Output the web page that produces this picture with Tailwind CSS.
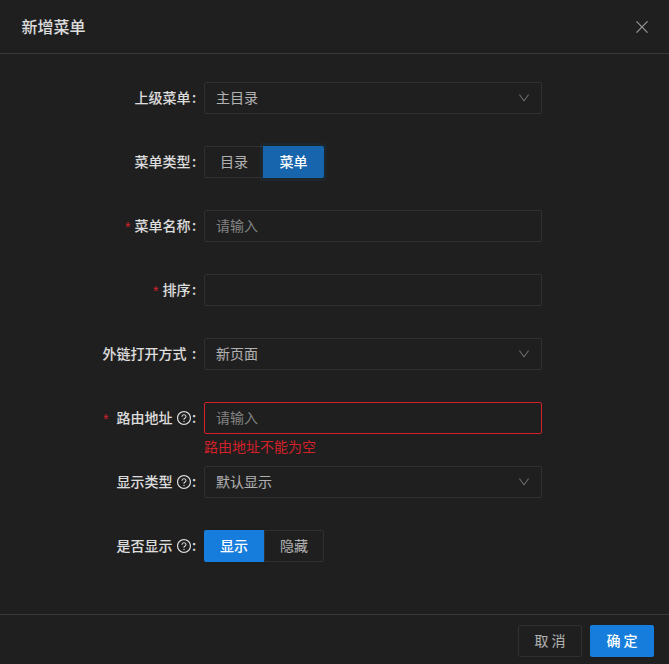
<!DOCTYPE html>
<html lang="zh-CN">
<head>
<meta charset="utf-8">
<title>新增菜单</title>
<script src="https://cdn.jsdelivr.net/npm/@tailwindcss/browser@4"></script>
</head>
<body class="bg-[#1f1f1f]">
<svg class="hidden" xmlns="http://www.w3.org/2000/svg">
  <symbol id="down" viewBox="64 64 896 896"><path d="M884 256h-75c-5.1 0-9.9 2.5-12.900 6.600L512 654.200 227.900 262.600c-3-4.100-7.800-6.600-12.900-6.600h-75c-6.500 0-10.300 7.400-6.500 12.700l352.600 486.100c12.800 17.600 39 17.600 51.700 0l352.600-486.100c3.900-5.300.1-12.700-6.400-12.700z"/></symbol>
  <symbol id="help" viewBox="64 64 896 896"><path d="M512 64C264.600 64 64 264.600 64 512s200.600 448 448 448 448-200.600 448-448S759.400 64 512 64zm0 820c-205.400 0-372-166.600-372-372s166.600-372 372-372 372 166.600 372 372-166.600 372-372 372z"/><path d="M623.600 316.700C593.600 290.400 554 276 512 276s-81.600 14.500-111.600 40.700C369.200 344 352 380.700 352 420v7.600c0 4.400 3.600 8 8 8h48c4.400 0 8-3.600 8-8V420c0-44.100 43.100-80 96-80s96 35.900 96 80c0 31.100-22 59.600-56.100 72.700-21.200 8.100-39.200 22.300-52.100 40.900-13.100 19-19.900 41.800-19.900 64.900V620c0 4.400 3.600 8 8 8h48c4.400 0 8-3.600 8-8v-22.700a48.300 48.300 0 0 1 30.900-44.800c59-22.700 97.100-74.700 97.100-132.500.1-39.300-17.100-76-48.300-103.300zM472 732a40 40 0 1 0 80 0 40 40 0 1 0-80 0z"/></symbol>
</svg>
<main class="flex h-[664px] w-[669px] flex-col bg-[#1f1f1f] font-['Noto_Sans_CJK_SC',sans-serif] text-sm leading-[22px] text-white/85">
  <header class="flex h-[54px] shrink-0 items-center justify-between border-b border-[#3a3a3a] pr-5 pl-[21.5px]">
    <h1 class="pb-[2px] text-base leading-[22px] font-medium">新增菜单</h1>
    <svg class="h-[14px] w-[14px] text-white/55" viewBox="0 0 14 14" fill="none" stroke="currentColor" stroke-width="1.150"><path d="M1.500 1.300 12.500 12.700M12.500 1.300 1.500 12.700"/></svg>
  </header>

  <form class="flex flex-1 flex-col gap-8 pt-7">
    <div class="flex h-8">
      <div class="flex w-[204px] items-center justify-end pr-2 pb-[2px] font-medium">上级菜单<span class="ml-[1.500px] w-[4px]">:</span></div>
      <div class="flex w-[338px] items-center justify-between rounded-[2px] border border-[#303030] px-[11px] text-white/65"><span class="pb-[2px]">主目录</span><svg class="h-3 w-3 fill-white/35"><use href="#down"/></svg></div>
    </div>
    <div class="flex h-8">
      <div class="flex w-[204px] items-center justify-end pr-2 pb-[2px] font-medium">菜单类型<span class="ml-[1.500px] w-[4px]">:</span></div>
      <div class="flex text-white/65">
        <div class="flex w-[59px] items-center justify-center rounded-l-[2px] border border-r-0 border-[#303030] pb-[2px]">目录</div>
        <div class="flex w-[61px] items-center justify-center rounded-r-[2px] bg-[#1765ad] pb-[2px] font-medium text-white shadow-[0_0_0_3px_rgba(23,125,220,0.08)]">菜单</div>
      </div>
    </div>
    <div class="flex h-8">
      <div class="flex w-[204px] items-center justify-end pr-2 pb-[2px] font-medium"><span class="mr-1 pt-[3px] font-['Liberation_Sans',sans-serif] font-normal text-[#d32029]">*</span>菜单名称<span class="ml-[1.500px] w-[4px]">:</span></div>
      <div class="flex w-[338px] items-center rounded-[2px] border border-[#303030] px-[11px] pb-[2px] text-white/45">请输入</div>
    </div>
    <div class="flex h-8">
      <div class="flex w-[204px] items-center justify-end pr-2 pb-[2px] font-medium"><span class="mr-1 pt-[3px] font-['Liberation_Sans',sans-serif] font-normal text-[#d32029]">*</span>排序<span class="ml-[1.500px] w-[4px]">:</span></div>
      <div class="w-[338px] rounded-[2px] border border-[#303030]"></div>
    </div>
    <div class="flex h-8">
      <div class="flex w-[204px] items-center justify-end pr-2 pb-[2px] font-medium">外链打开方式<span class="ml-[5.500px] w-[4px]">:</span></div>
      <div class="flex w-[338px] items-center justify-between rounded-[2px] border border-[#303030] px-[11px] text-white/65"><span class="pb-[2px]">新页面</span><svg class="h-3 w-3 fill-white/35"><use href="#down"/></svg></div>
    </div>
    <div class="flex h-8">
      <div class="flex w-[204px] items-center justify-end pr-2 pb-[2px] font-medium"><span class="mr-2 pt-[3px] font-['Liberation_Sans',sans-serif] font-normal text-[#d32029]">*</span>路由地址<svg class="mt-[2px] ml-1 h-[14px] w-[14px] fill-current"><use href="#help"/></svg><span class="ml-[1.500px] w-[4px]">:</span></div>
      <div class="w-[338px]">
        <div class="flex h-8 items-center rounded-[2px] border border-[#d32029] px-[11px] pb-[2px] text-white/45">请输入</div>
        <p class="pt-px text-[#d32029]">路由地址不能为空</p>
      </div>
    </div>
    <div class="flex h-8">
      <div class="flex w-[204px] items-center justify-end pr-2 pb-[2px] font-medium">显示类型<svg class="mt-[2px] ml-1 h-[14px] w-[14px] fill-current"><use href="#help"/></svg><span class="ml-[1.500px] w-[4px]">:</span></div>
      <div class="flex w-[338px] items-center justify-between rounded-[2px] border border-[#303030] px-[11px] text-white/65"><span class="pb-[2px]">默认显示</span><svg class="h-3 w-3 fill-white/35"><use href="#down"/></svg></div>
    </div>
    <div class="flex h-8">
      <div class="flex w-[204px] items-center justify-end pr-2 pb-[2px] font-medium">是否显示<svg class="mt-[2px] ml-1 h-[14px] w-[14px] fill-current"><use href="#help"/></svg><span class="ml-[1.500px] w-[4px]">:</span></div>
      <div class="flex text-white/65">
        <div class="flex w-[60px] items-center justify-center rounded-l-[2px] bg-[#177ddc] pb-[2px] font-medium text-white">显示</div>
        <div class="flex w-[60px] items-center justify-center rounded-r-[2px] border border-[#303030] pb-[2px]">隐藏</div>
      </div>
    </div>
  </form>

  <footer class="flex h-[50px] shrink-0 justify-end gap-2 border-t border-[#3a3a3a] pt-[10px] pr-[15px]">
    <button type="button" class="h-8 w-16 rounded-[2px] border border-[#303030] pb-[2px] text-white/65 shadow-[0_2px_0_rgba(0,0,0,0.045)]">取 消</button>
    <button type="button" class="h-8 w-16 rounded-[2px] bg-[#177ddc] pb-[2px] font-medium text-white shadow-[0_2px_0_rgba(0,0,0,0.045)]">确 定</button>
  </footer>
</main>
</body>
</html>
